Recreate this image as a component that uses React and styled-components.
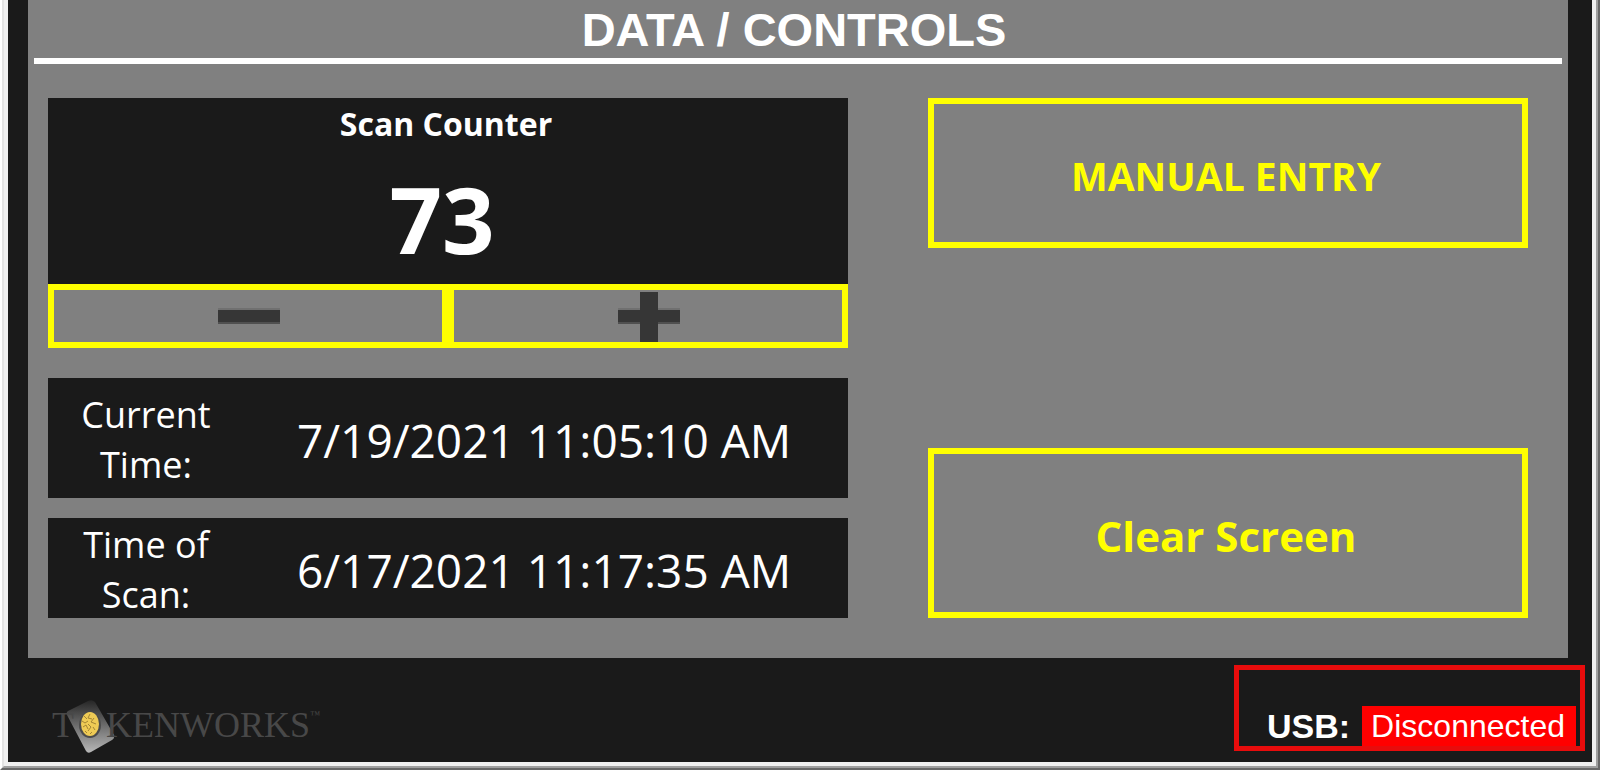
import React from "react"
import styled, { createGlobalStyle } from "styled-components"

const GlobalStyle = createGlobalStyle`
* {
    box-sizing: border-box;
}
body {
    margin: 0;
    background-color: #1a1a1a;
    font-family: "Open Sans", "Noto Sans", sans-serif;
    color: white;
}
`

/* sunken window edge, two tones on every side */
const Window = styled.div`
min-height: 100vh;
display: flex;
border-style: solid;
border-width: 0px 2px 2px 2px;
border-color: #696969 #696969 #696969 #ffffff;
`
const WindowEdge = styled.div`
flex: 1;
display: flex;
border-style: solid;
border-width: 0px 2px 2px 2px;
border-color: #a0a0a0 #a0a0a0 #a0a0a0 #e3e3e3;
`
const Content = styled.div`
flex: 1;
display: flex;
flex-direction: column;
background-color: #1a1a1a;
border: 4px solid #f0f0f0;
border-top: none;
`
const Panel = styled.main`
margin: 0px 24px 0px 20px;
background-color: #808080;
`
const Title = styled.h1`
margin: 0px 6px;
padding: 2px 8px 0px 0px;
border-bottom: 6px solid white;
font-family: "Liberation Sans", Arial, sans-serif;
font-size: 47px;
line-height: 56px;
font-weight: 700;
text-align: center;
`
const Columns = styled.div`
display: grid;
grid-template-columns: 4fr 3fr;
column-gap: 80px;
padding: 34px 40px 40px 20px;
`
const Left = styled.div`
display: flex;
flex-direction: column;
`
const Right = styled.div`
display: flex;
flex-direction: column;
justify-content: space-between;
`
const Counter = styled.section`
padding-right: 4px;
background-color: #1a1a1a;
text-align: center;
font-weight: 700;
`
const CounterTitle = styled.h2`
margin: 0px;
font-size: 32px;
line-height: 52px;
`
const CounterValue = styled.output`
display: block;
padding: 4px 8px 0px 0px;
font-size: 92px;
line-height: 130px;
`
const CounterButtons = styled.div`
display: grid;
grid-template-columns: 1fr 1fr;
margin-bottom: 30px;
`
const Button = styled.button`
padding: 0px;
border: 6px solid #ffff00;
background-color: transparent;
color: #ffff00;
font-family: inherit;
font-weight: 700;
cursor: pointer;
`
const StepButton = styled(Button)`
height: 64px;
display: flex;
justify-content: center;
`
const ActionButton = styled(Button)`
height: ${(props) => props.$height}px;
padding: 4px 4px 0px 0px;
font-size: ${(props) => props.$size}px;
`
const TimeRow = styled.div`
display: grid;
grid-template-columns: 1fr 3fr;
align-items: center;
align-content: center;
height: ${(props) => props.$height}px;
background-color: #1a1a1a;
text-align: center;

& + & {
    margin-top: 20px;
}
`
const TimeLabel = styled.span`
padding: 4px 36px 0px 32px;
font-size: 36px;
line-height: 50px;
`
const TimeValue = styled.time`
padding: 4px 8px 0px 0px;
font-size: 46px;
line-height: 60px;
white-space: nowrap;
`
const Footer = styled.footer`
flex: 1;
display: flex;
justify-content: space-between;
padding: 7px 7px 11px 44px;
`
const Logo = styled.div`
display: flex;
align-self: flex-end;
font-family: "Liberation Serif", "Times New Roman", serif;
font-size: 36px;
line-height: 40px;
color: #484848;
`
const LogoText = styled.span`
position: relative;
`
const LogoMark = styled.sup`
font-size: 10px;
line-height: 20px;
`
const Card = styled.svg`
flex: none;
margin: -5px -10px -3px -8px;
`
const Usb = styled.div`
display: flex;
align-items: flex-end;
padding: 0px 4px 0px 28px;
border: 5px solid #e80c0c;
font-family: "Liberation Sans", Arial, sans-serif;
font-size: 32px;
line-height: 40px;
`
const UsbLabel = styled.span`
margin-right: 12px;
font-size: 34px;
font-weight: 700;
`
const UsbStatus = styled.span`
padding: 0px 11px 0px 9px;
background-color: #ff0000;
`

function Minus() {
    return (
        <svg width="64" height="52" viewBox="0 0 64 52" aria-hidden="true">
            <rect x="2" y="18" width="62" height="2" fill="#707070" />
            <rect x="2" y="20" width="62" height="12" fill="#363636" />
            <rect x="2" y="32" width="62" height="2" fill="#505050" />
        </svg>
    )
}

function Plus() {
    return (
        <svg width="64" height="52" viewBox="0 0 64 52" aria-hidden="true">
            <rect x="2" y="18" width="62" height="2" fill="#707070" />
            <rect x="2" y="20" width="62" height="12" fill="#363636" />
            <rect x="2" y="32" width="62" height="2" fill="#505050" />
            <rect x="24" y="2" width="18" height="50" fill="#363636" />
        </svg>
    )
}

function LogoCard() {
    return (
        <Card width="50" height="54" viewBox="0 0 50 54" aria-hidden="true">
            <defs>
                <linearGradient id="card" x1="0" y1="0" x2="0" y2="1">
                    <stop offset="0" stopColor="#262626" />
                    <stop offset="0.45" stopColor="#686868" />
                    <stop offset="1" stopColor="#b8b8b8" />
                </linearGradient>
            </defs>
            <path d="M2 11 L22 1 Q26 -1 29 2 L48 35 Q49 38 46 40 L25 52 Q22 54 20 51 L1 15 Q0 12 2 11 Z" fill="url(#card)" />
            <ellipse cx="24" cy="25" rx="11" ry="13" fill="#4c4c4c" />
            <ellipse cx="24" cy="24" rx="9" ry="12" fill="#efcb55" />
            <path
                d="M18 16 l3 3 M24 14 l-2 4 l4 1 M28 18 l-3 4 l5 2 M16 21 l3 2 l3 -2 M17 27 l3 -2 l2 4 M22 24 l3 3 l-3 4 M27 27 l2 3 M19 31 l2 2 M26 32 l-2 2"
                fill="none"
                stroke="#a38534"
                strokeWidth="1"
            />
        </Card>
    )
}

export default function App()
{
    const [count, setCount] = React.useState(73)
    const [scanTime, setScanTime] = React.useState("6/17/2021 11:17:35 AM")

    function handleStep(step){
        setCount(function(oldvalue){
            return Math.max(0, oldvalue + step)
        })
    }

    return (
        <Window>
            <GlobalStyle />
            <WindowEdge>
                <Content>
                    <Panel>
                        <Title>DATA / CONTROLS</Title>
                        <Columns>
                            <Left>
                                <Counter>
                                    <CounterTitle>Scan Counter</CounterTitle>
                                    <CounterValue>{count}</CounterValue>
                                </Counter>
                                <CounterButtons>
                                    <StepButton aria-label="Decrease" onClick={() => handleStep(-1)}>
                                        <Minus />
                                    </StepButton>
                                    <StepButton aria-label="Increase" onClick={() => handleStep(1)}>
                                        <Plus />
                                    </StepButton>
                                </CounterButtons>
                                <TimeRow $height={120}>
                                    <TimeLabel>Current Time:</TimeLabel>
                                    <TimeValue>7/19/2021 11:05:10 AM</TimeValue>
                                </TimeRow>
                                <TimeRow $height={100}>
                                    <TimeLabel>Time of Scan:</TimeLabel>
                                    <TimeValue>{scanTime}</TimeValue>
                                </TimeRow>
                            </Left>
                            <Right>
                                <ActionButton $height={150} $size={39}>MANUAL ENTRY</ActionButton>
                                <ActionButton $height={170} $size={42} onClick={() => setScanTime("")}>Clear Screen</ActionButton>
                            </Right>
                        </Columns>
                    </Panel>
                    <Footer>
                        <Logo>
                            <LogoText>T</LogoText>
                            <LogoCard />
                            <LogoText>KENWORKS</LogoText>
                            <LogoMark>™</LogoMark>
                        </Logo>
                        <Usb>
                            <UsbLabel>USB:</UsbLabel>
                            <UsbStatus>Disconnected</UsbStatus>
                        </Usb>
                    </Footer>
                </Content>
            </WindowEdge>
        </Window>
    )
}
